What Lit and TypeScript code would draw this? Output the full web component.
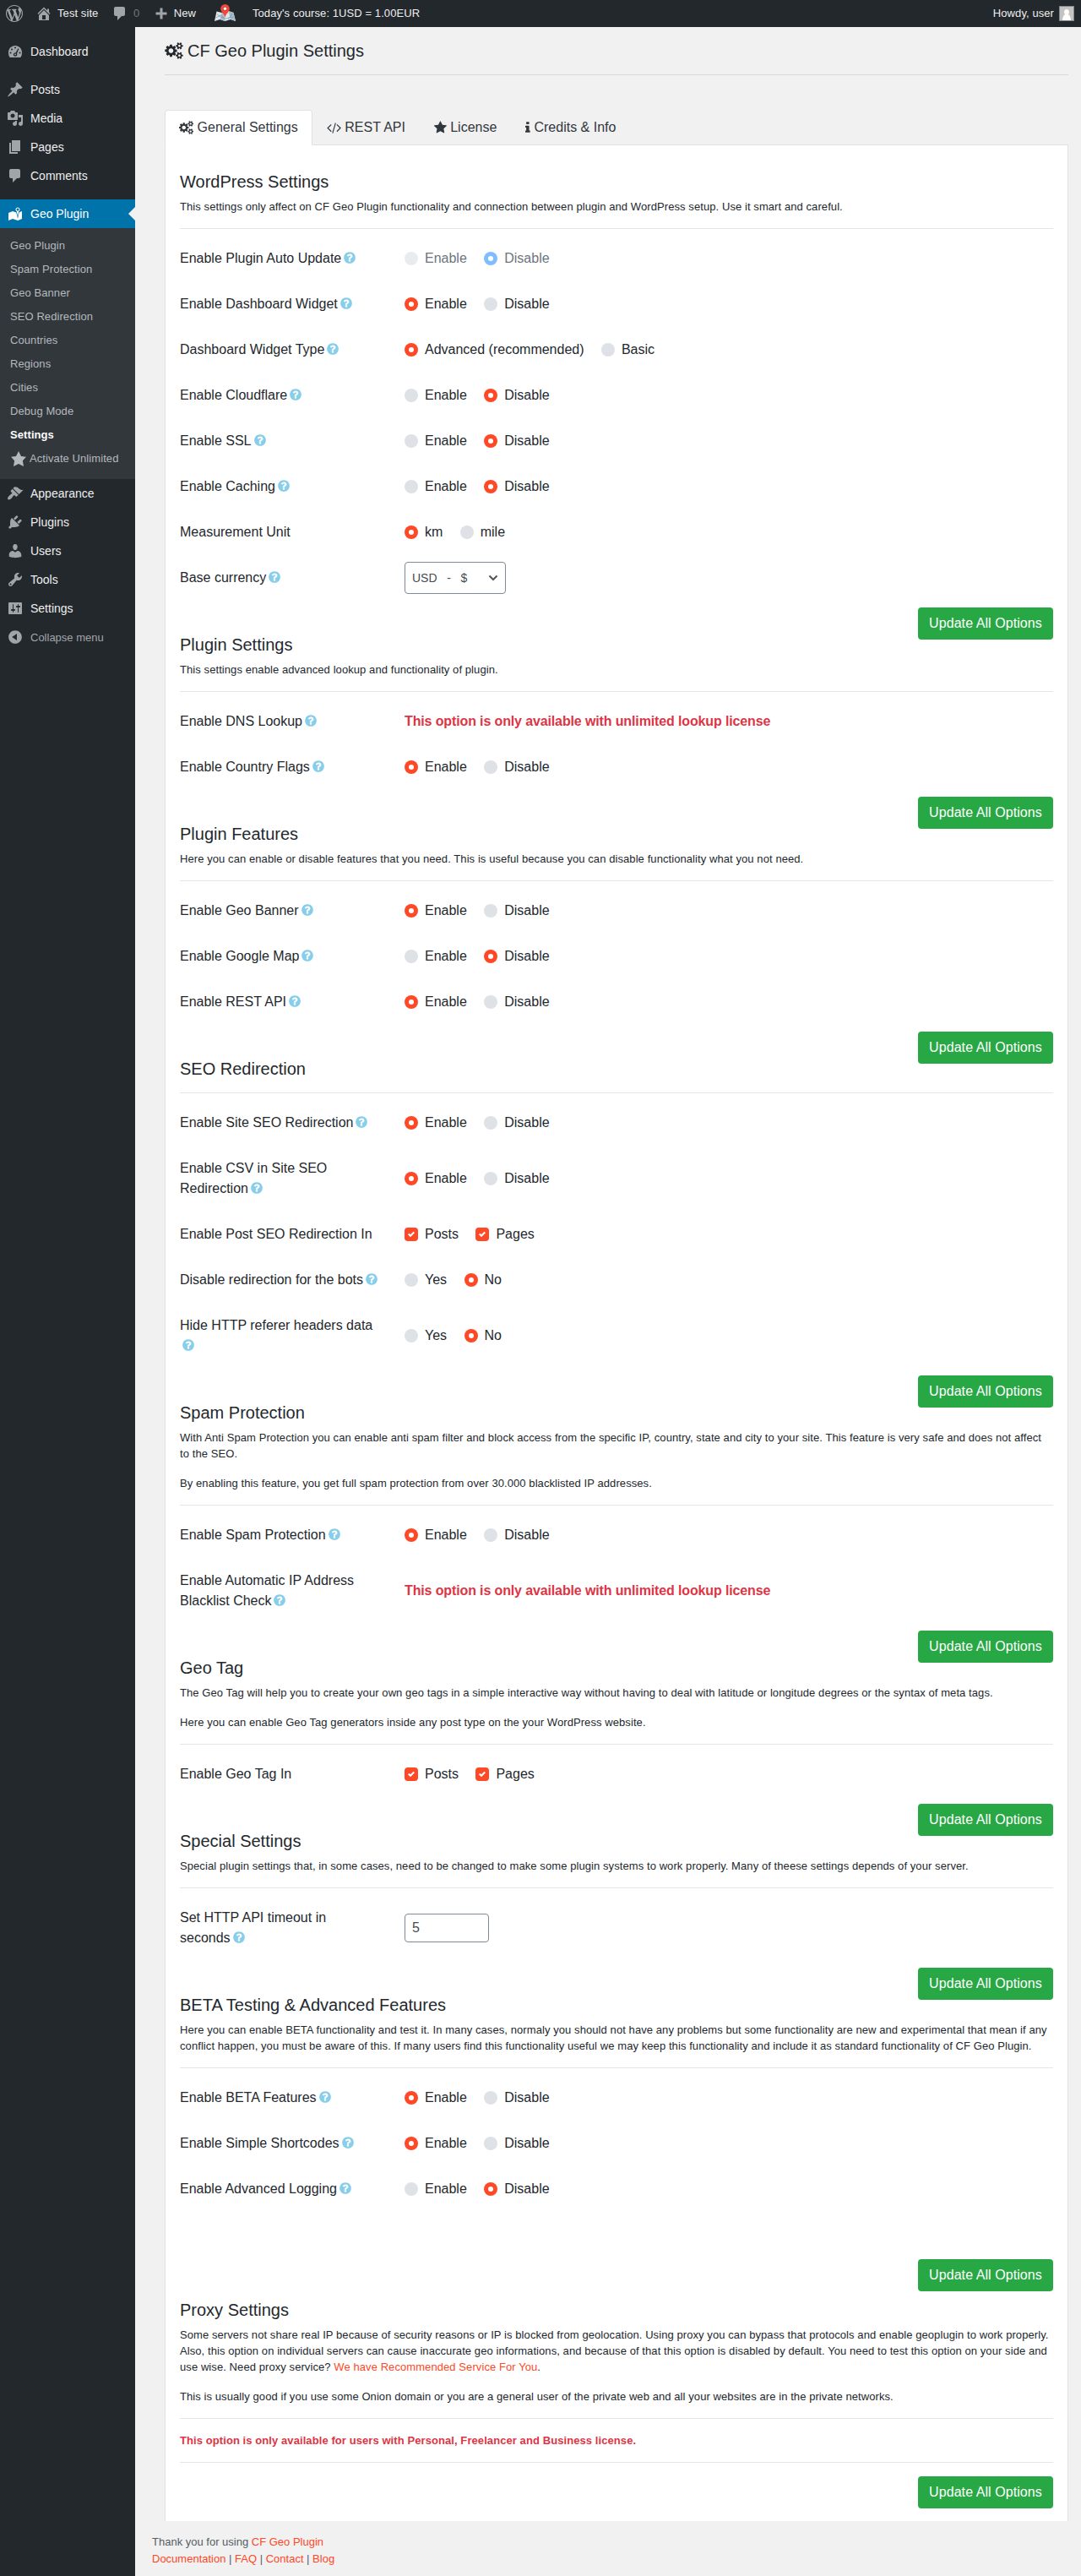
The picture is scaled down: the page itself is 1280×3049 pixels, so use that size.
import { LitElement, html, css, svg, nothing, TemplateResult } from 'lit';
import { customElement, property } from 'lit/decorators.js';
import { classMap } from 'lit/directives/class-map.js';

type Choice = { label: string; on?: boolean };

type Field = {
  label: string;
  help?: boolean;
  disabled?: boolean;
  radios?: Choice[];
  checks?: Choice[];
  notice?: string;
  select?: string;
  input?: string;
};

type Section = {
  title: string;
  text?: (string | TemplateResult)[];
  fields?: Field[];
  warning?: string;
  spacer?: boolean;
};

// name: [viewBox, path]
const ICONS: Record<string, [string, string]> = {
  wordpress: ['0 0 20 20', 'M20 10c0-5.51-4.49-10-10-10C4.48 0 0 4.49 0 10c0 5.52 4.48 10 10 10 5.51 0 10-4.48 10-10zM7.78 15.37L4.37 6.22c.55-.02 1.17-.08 1.17-.08.5-.06.44-1.13-.06-1.11 0 0-1.45.11-2.37.11-.18 0-.37 0-.58-.01C4.12 2.69 6.87 1.11 10 1.11c2.33 0 4.45.87 6.05 2.34-.68-.11-1.65.39-1.65 1.58 0 .74.45 1.36.9 2.1.35.61.55 1.36.55 2.46 0 1.49-1.4 5-1.4 5l-3.03-8.37c.54-.02.82-.17.82-.17.5-.05.44-1.25-.06-1.22 0 0-1.44.12-2.38.12-.87 0-2.33-.12-2.33-.12-.5-.03-.56 1.2-.06 1.22l.92.08 1.26 3.41zM17.41 10c.24-.64.74-1.87.43-4.25.7 1.29 1.05 2.71 1.05 4.25 0 3.29-1.73 6.24-4.4 7.78.97-2.59 1.94-5.2 2.92-7.78zM6.1 18.09C3.12 16.65 1.11 13.53 1.11 10c0-1.3.23-2.48.72-3.59C3.25 10.3 4.67 14.2 6.1 18.09zm4.03-6.63l2.58 6.98c-.86.29-1.76.45-2.71.45-.79 0-1.57-.11-2.29-.33.81-2.38 1.62-4.74 2.42-7.1z'],
  home: ['0 0 20 20', 'M16 8.5l1.53 1.53-1.06 1.06L10 4.6l-6.47 6.49-1.06-1.06L10 2.5l4 4v-2h2v4zm-6-2.46l6 5.99V18H4v-5.97zM12 17v-5H8v5h4z'],
  comments: ['0 0 20 20', 'M5 2h9c1.1 0 2 .9 2 2v7c0 1.1-.9 2-2 2h-2l-5 5v-5H5c-1.1 0-2-.9-2-2V4c0-1.1.9-2 2-2z'],
  plus: ['0 0 20 20', 'M16.500 8.500v3h-5v5h-3v-5h-5v-3h5v-5h3v5z'],
  dashboard: ['0 0 20 20', 'M3.76 17h12.48c1.34-1.63 1.76-3.7 1.76-5.96 0-4.42-3.58-8.04-8-8.04s-8 3.62-8 8.04c0 2.27.42 4.33 1.76 5.96zM9 5.500a1 1 0 1 0 2 0 1 1 0 1 0-2 0zM5 7.500a1 1 0 1 0 2 0 1 1 0 1 0-2 0zM3.500 11.500a1 1 0 1 0 2 0 1 1 0 1 0-2 0zM14.500 11.500a1 1 0 1 0 2 0 1 1 0 1 0-2 0zM13.500 6.300l.9.700-2.300 4.900c.4 1.200.2 2.700-.6 3.400-.9.800-2.300.700-3.100-.2-.8-1-.7-2.400.3-3.100.5-.5 1.200-.6 1.800-.5zM9.200 13.500a.9.9 0 1 0 1.800 0 .9.9 0 1 0-1.800 0z'],
  posts: ['0 0 20 20', 'M10.44 3.02l1.82-1.82 6.36 6.35-1.83 1.82c-1.05-.68-2.48-.57-3.41.36l-.75.75c-.92.93-1.04 2.35-.35 3.41l-1.83 1.82-2.41-2.41-2.8 2.79c-.42.42-3.38 2.71-3.8 2.29s1.86-3.39 2.28-3.81l2.79-2.79L4.1 9.36l1.83-1.82c1.05.69 2.48.57 3.4-.36l.75-.75c.93-.92 1.05-2.35.36-3.41z'],
  media: ['0 0 20 20', 'M13 11V4c0-.55-.45-1-1-1h-1.67L9 1H5L3.67 3H2c-.55 0-1 .45-1 1v7c0 .55.45 1 1 1h10c.55 0 1-.45 1-1zM7 4.5c1.38 0 2.5 1.12 2.5 2.5S8.38 9.5 7 9.5 4.5 8.38 4.5 7 5.62 4.5 7 4.5zM14 6h5v10.5c0 1.38-1.12 2.5-2.5 2.5S14 17.88 14 16.5s1.12-2.5 2.5-2.5c.17 0 .34.02.5.05V9h-3V6zm-4 8.05V13h2v3.5c0 1.38-1.12 2.5-2.5 2.5S7 17.88 7 16.5 8.12 14 9.5 14c.17 0 .34.02.5.05z'],
  pages: ['0 0 20 20', 'M6 15V2h10v13H6zm-1 1h8v2H3V5h2v11z'],
  geo: ['0 0 20 20', 'M13 13.14l1.17-5.94c.79-.43 1.33-1.25 1.33-2.2 0-1.38-1.12-2.5-2.5-2.5S10.5 3.62 10.5 5c0 .95.54 1.77 1.33 2.2zm0-9.64c.83 0 1.5.67 1.5 1.5s-.67 1.5-1.5 1.5-1.5-.67-1.5-1.5.67-1.5 1.5-1.5zm1.72 4.8L18 6.97v9L13.12 18 7 15.97l-5 2v-9l5-2 4.27 1.41 1.73 7.3z'],
  starFilled: ['0 0 20 20', 'M10 1l3 6 6 .75-4.12 4.62L16 19l-6-3-6 3 1.13-6.63L1 7.75 7 7z'],
  appearance: ['0 0 20 20', 'M14.48 11.06L7.41 3.99l1.5-1.5c.5-.56 2.3-.47 3.51.32 1.21.8 1.43 1.28 2.91 2.1 1.18.64 2.45 1.26 4.45.85zm-.71.71L6.7 4.7 4.93 6.47c-.39.39-.39 1.02 0 1.41l1.06 1.06c.39.39.39 1.03 0 1.42-.6.6-1.43 1.11-2.21 1.69-.35.26-.7.53-1.01.84C1.43 14.23.4 16.08 1.4 17.07c.99 1 2.84-.03 4.18-1.36.31-.31.58-.66.85-1.02.57-.78 1.08-1.61 1.69-2.21.39-.39 1.02-.39 1.41 0l1.06 1.06c.39.39 1.02.39 1.41 0z'],
  plugins: ['0 0 20 20', 'M13.11 4.36L9.87 7.6 8 5.73l3.24-3.24c.35-.34 1.05-.2 1.56.32.52.51.66 1.21.31 1.55zm-8 1.77l.91-1.12 9.01 9.01-1.19.84c-.71.71-2.63 1.16-3.82 1.16H6.14L4.9 17.26c-.59.59-1.54.59-2.12 0-.59-.58-.59-1.53 0-2.12l1.24-1.24v-3.88c0-1.13.4-3.19 1.09-3.89zm7.26 3.97l3.24-3.24c.34-.35 1.04-.21 1.55.31.52.51.66 1.21.31 1.55l-3.24 3.25z'],
  users: ['0 0 20 20', 'M10 9.25c-2.27 0-2.73-3.44-2.73-3.44C7 4.02 7.82 2 9.97 2c2.16 0 2.98 2.02 2.71 3.81 0 0-.41 3.44-2.68 3.44zm0 2.57L12.72 10c2.39 0 4.52 2.33 4.52 4.53v2.49s-3.65 1.13-7.24 1.13c-3.65 0-7.24-1.13-7.24-1.13v-2.49c0-2.25 1.94-4.48 4.47-4.48z'],
  tools: ['0 0 20 20', 'M16.68 9.77c-1.34 1.34-3.3 1.67-4.95.99l-5.41 6.52c-.99.99-2.59.99-3.58 0s-.99-2.59 0-3.57l6.52-5.42c-.68-1.65-.35-3.61.99-4.95 1.28-1.28 3.12-1.62 4.72-1.06l-2.89 2.89 2.82 2.82 2.86-2.87c.53 1.58.18 3.39-1.08 4.65zM3.81 16.21c.4.39 1.04.39 1.43 0 .4-.4.4-1.04 0-1.43-.39-.4-1.03-.4-1.43 0-.39.39-.39 1.03 0 1.43z'],
  settings: ['0 0 20 20', 'M18 16V4c0-.55-.45-1-1-1H3c-.55 0-1 .45-1 1v12c0 .55.45 1 1 1h14c.55 0 1-.45 1-1zM8 11h1c.55 0 1 .45 1 1s-.45 1-1 1H8v1.5c0 .28-.22.5-.5.5s-.5-.22-.5-.5V13H6c-.55 0-1-.45-1-1s.45-1 1-1h1V5.5c0-.28.22-.5.5-.5s.5.22.5.5V11zm5-2h-1c-.55 0-1-.45-1-1s.45-1 1-1h1V5.5c0-.28.22-.5.5-.5s.5.22.5.5V7h1c.55 0 1 .45 1 1s-.45 1-1 1h-1v5.5c0 .28-.22.5-.5.5s-.5-.22-.5-.5V9z'],
  collapse: ['0 0 20 20', 'M10 2.16c4.33 0 7.84 3.51 7.84 7.84s-3.51 7.84-7.84 7.84S2.16 14.33 2.16 10 5.67 2.16 10 2.16zm2 11.72V6.12L6.18 9.97z'],
  cogs: ['0 0 1920 1792', 'M896 896q0-106-75-181t-181-75-181 75-75 181 75 181 181 75 181-75 75-181zm768 512q0-52-38-90t-90-38-90 38-38 90q0 53 37.5 90.5t90.5 37.5 90.5-37.5 37.5-90.5zm0-1024q0-52-38-90t-90-38-90 38-38 90q0 53 37.5 90.5t90.5 37.5 90.5-37.5 37.5-90.5zm-384 421v185q0 10-7 19.5t-16 10.5l-155 24q-11 35-32 76 34 48 90 115 7 11 7 20 0 12-7 19-23 30-82.5 89.5t-78.5 59.5q-11 0-21-7l-115-90q-37 19-77 31-11 108-23 155-7 24-30 24h-186q-11 0-20-7.5t-10-17.5l-23-153q-34-10-75-31l-118 89q-7 7-20 7-11 0-21-8-144-133-144-160 0-9 7-19 10-14 41-53t47-61q-23-44-35-82l-152-24q-10-1-17-9.5t-7-19.5v-185q0-10 7-19.5t16-10.5l155-24q11-35 32-76-34-48-90-115-7-11-7-20 0-12 7-20 22-30 82-89t79-59q11 0 21 7l115 90q34-18 77-32 11-108 23-154 7-24 30-24h186q11 0 20 7.5t10 17.5l23 153q34 10 75 31l118-89q8-7 20-7 11 0 21 8 144 133 144 160 0 8-7 19-12 16-42 54t-45 60q23 48 34 82l152 23q10 2 17 10.5t7 19.5zm640 533v140q0 16-149 31-12 27-30 52 51 113 51 138 0 4-4 7-122 71-124 71-8 0-46-47t-52-68q-20 2-30 2t-30-2q-14 21-52 68t-46 47q-2 0-124-71-4-3-4-7 0-25 51-138-18-25-30-52-149-15-149-31v-140q0-16 149-31 13-29 30-52-51-113-51-138 0-4 4-7 4-2 35-20t59-34 30-16q8 0 46 46.5t52 67.5q20-2 30-2t30 2q51-71 92-112l6-2q4 0 124 70 4 3 4 7 0 25-51 138 17 23 30 52 149 15 149 31zm0-1024v140q0 16-149 31-12 27-30 52 51 113 51 138 0 4-4 7-122 71-124 71-8 0-46-47t-52-68q-20 2-30 2t-30-2q-14 21-52 68t-46 47q-2 0-124-71-4-3-4-7 0-25 51-138-18-25-30-52-149-15-149-31v-140q0-16 149-31 13-29 30-52-51-113-51-138 0-4 4-7 4-2 35-20t59-34 30-16q8 0 46 46.5t52 67.5q20-2 30-2t30 2q51-71 92-112l6-2q4 0 124 70 4 3 4 7 0 25-51 138 17 23 30 52 149 15 149 31z'],
  code: ['64 0 1920 1792', 'M681 1399l-50 50q-10 10-23 10t-23-10l-466-466q-10-10-10-23t10-23l466-466q10-10 23-10t23 10l50 50q10 10 10 23t-10 23l-393 393 393 393q10 10 10 23t-10 23zm591-1067l-373 1291q-4 13-15.5 19.5t-23.5 2.5l-62-17q-13-4-19.5-15.5t-2.5-24.5l373-1291q4-13 15.5-19.5t23.5-2.5l62 17q13 4 19.5 15.5t2.5 24.5zm657 651l-466 466q-10 10-23 10t-23-10l-50-50q-10-10-10-23t10-23l393-393-393-393q-10-10-10-23t10-23l50-50q10-10 23-10t23 10l466 466q10 10 10 23t-10 23z'],
  star: ['64 0 1664 1792', 'M1728 647q0 22-26 48l-363 354 86 500q1 7 1 20 0 21-10.5 35.5t-30.5 14.5q-19 0-40-12l-449-236-449 236q-22 12-40 12-21 0-31.5-14.5t-10.5-35.5q0-6 2-20l86-500-364-354q-25-27-25-48 0-37 56-46l502-73 225-455q19-41 49-41t49 41l225 455 502 73q56 9 56 46z'],
  info: ['576 0 640 1792', 'M1216 1344v128q0 26-19 45t-45 19h-512q-26 0-45-19t-19-45v-128q0-26 19-45t45-19h64v-384h-64q-26 0-45-19t-19-45v-128q0-26 19-45t45-19h384q26 0 45 19t19 45v576h64q26 0 45 19t19 45zm-128-1152v192q0 26-19 45t-45 19h-256q-26 0-45-19t-19-45v-192q0-26 19-45t45-19h256q26 0 45 19t19 45z'],
  question: ['128 0 1536 1792', 'M1024 1376v-192q0-14-9-23t-23-9h-192q-14 0-23 9t-9 23v192q0 14 9 23t23 9h192q14 0 23-9t9-23zm256-672q0-88-55.5-163t-138.5-116-170-41q-243 0-371 213-15 24 8 42l132 100q7 6 19 6 16 0 25-12 53-68 86-92 34-24 86-24 48 0 85.5 26t37.5 59q0 38-20 61t-68 45q-63 28-115.5 86.5t-52.5 125.5v36q0 14 9 23t23 9h192q14 0 23-9t9-23q0-19 21.5-49.5t54.5-49.5q32-18 49-28.5t46-35 44.5-48 28-60.5 12.5-81zm384 192q0 209-103 385.5t-279.5 279.5-385.5 103-385.5-103-279.5-279.5-103-385.5 103-385.5 279.5-279.5 385.5-103 385.5 103 279.5 279.5 103 385.5z'],
};

const icon = (name: string, cls = 'icon') => {
  const [box, path] = ICONS[name];
  return html`<svg class=${cls} viewBox=${box} fill="currentColor">${svg`<path fill-rule="evenodd" d=${path}></path>`}</svg>`;
};

const toggle = (on: string, ...labels: string[]): Choice[] =>
  labels.map(label => ({ label, on: label === on }));
const enable = (on = true) => toggle(on ? 'Enable' : 'Disable', 'Enable', 'Disable');
const postTypes: Choice[] = [{ label: 'Posts', on: true }, { label: 'Pages', on: true }];
const unlimitedOnly = 'This option is only available with unlimited lookup license';

const SECTIONS: Section[] = [
  {
    title: 'WordPress Settings',
    text: ['This settings only affect on CF Geo Plugin functionality and connection between plugin and WordPress setup. Use it smart and careful.'],
    fields: [
      { label: 'Enable Plugin Auto Update', help: true, disabled: true, radios: enable(false) },
      { label: 'Enable Dashboard Widget', help: true, radios: enable() },
      { label: 'Dashboard Widget Type', help: true, radios: toggle('Advanced (recommended)', 'Advanced (recommended)', 'Basic') },
      { label: 'Enable Cloudflare', help: true, radios: enable(false) },
      { label: 'Enable SSL', help: true, radios: enable(false) },
      { label: 'Enable Caching', help: true, radios: enable(false) },
      { label: 'Measurement Unit', radios: toggle('km', 'km', 'mile') },
      { label: 'Base currency', help: true, select: 'USD\u00a0\u00a0\u00a0-\u00a0\u00a0\u00a0$' },
    ],
  },
  {
    title: 'Plugin Settings',
    text: ['This settings enable advanced lookup and functionality of plugin.'],
    fields: [
      { label: 'Enable DNS Lookup', help: true, notice: unlimitedOnly },
      { label: 'Enable Country Flags', help: true, radios: enable() },
    ],
  },
  {
    title: 'Plugin Features',
    text: ['Here you can enable or disable features that you need. This is useful because you can disable functionality what you not need.'],
    fields: [
      { label: 'Enable Geo Banner', help: true, radios: enable() },
      { label: 'Enable Google Map', help: true, radios: enable(false) },
      { label: 'Enable REST API', help: true, radios: enable() },
    ],
  },
  {
    title: 'SEO Redirection',
    fields: [
      { label: 'Enable Site SEO Redirection', help: true, radios: enable() },
      { label: 'Enable CSV in Site SEO Redirection', help: true, radios: enable() },
      { label: 'Enable Post SEO Redirection In', checks: postTypes },
      { label: 'Disable redirection for the bots', help: true, radios: toggle('No', 'Yes', 'No') },
      { label: 'Hide HTTP referer headers data', help: true, radios: toggle('No', 'Yes', 'No') },
    ],
  },
  {
    title: 'Spam Protection',
    text: [
      'With Anti Spam Protection you can enable anti spam filter and block access from the specific IP, country, state and city to your site. This feature is very safe and does not affect to the SEO.',
      'By enabling this feature, you get full spam protection from over 30.000 blacklisted IP addresses.',
    ],
    fields: [
      { label: 'Enable Spam Protection', help: true, radios: enable() },
      { label: 'Enable Automatic IP Address Blacklist Check', help: true, notice: unlimitedOnly },
    ],
  },
  {
    title: 'Geo Tag',
    text: [
      'The Geo Tag will help you to create your own geo tags in a simple interactive way without having to deal with latitude or longitude degrees or the syntax of meta tags.',
      'Here you can enable Geo Tag generators inside any post type on the your WordPress website.',
    ],
    fields: [{ label: 'Enable Geo Tag In', checks: postTypes }],
  },
  {
    title: 'Special Settings',
    text: ['Special plugin settings that, in some cases, need to be changed to make some plugin systems to work properly. Many of theese settings depends of your server.'],
    fields: [{ label: 'Set HTTP API timeout in seconds', help: true, input: '5' }],
  },
  {
    title: 'BETA Testing & Advanced Features',
    text: ['Here you can enable BETA functionality and test it. In many cases, normaly you should not have any problems but some functionality are new and experimental that mean if any conflict happen, you must be aware of this. If many users find this functionality useful we may keep this functionality and include it as standard functionality of CF Geo Plugin.'],
    fields: [
      { label: 'Enable BETA Features', help: true, radios: enable() },
      { label: 'Enable Simple Shortcodes', help: true, radios: enable() },
      { label: 'Enable Advanced Logging', help: true, radios: enable(false) },
    ],
    spacer: true,
  },
  {
    title: 'Proxy Settings',
    text: [
      html`Some servers not share real IP because of security reasons or IP is blocked from geolocation. Using proxy you can bypass that protocols and enable geoplugin to work properly. Also, this option on individual servers can cause inaccurate geo informations, and because of that this option is disabled by default. You need to test this option on your side and use wise. Need proxy service? <a class="link">We have Recommended Service For You</a>.`,
      'This is usually good if you use some Onion domain or you are a general user of the private web and all your websites are in the private networks.',
    ],
    warning: 'This option is only available for users with Personal, Freelancer and Business license.',
  },
];

@customElement('admin-bar')
export class AdminBar extends LitElement {
  static styles = css`
    :host {
      display: flex;
      align-items: center;
      height: 32px;
      box-sizing: border-box;
      padding: 0 8px 0 7px;
      background: #23282d;
      color: #eee;
      font-size: 13px;
      letter-spacing: 0.08px;
    }
    .icon {
      width: 20px;
      height: 20px;
      color: #a0a5aa;
    }
    .item {
      display: flex;
      align-items: center;
      gap: 6px;
      margin-right: 15px;
      height: 32px;
    }
    .home {
      margin-right: 15.5px;
    }
    .count {
      color: #72777c;
    }
    .comments {
      margin-right: 15.5px;
    }
    .new {
      gap: 5px;
      margin-right: 22px;
    }
    .map {
      width: 25px;
      height: 21px;
      margin: 0 20px 2px 0;
    }
    .text {
      line-height: 32px;
      padding-bottom: 1px;
    }
    .user {
      margin-left: auto;
    }
    .avatar {
      width: 16px;
      height: 16px;
      margin-left: 6px;
      border: 1px solid #82878c;
      background: #c3c3c3;
    }
  `;

  render() {
    return html`
      <span class="item">${icon('wordpress')}</span>
      <span class="item home">${icon('home')}<span class="text">Test site</span></span>
      <span class="item comments">${icon('comments')}<span class="text count">0</span></span>
      <span class="item new">${icon('plus')}<span class="text">New</span></span>
      <svg class="map" viewBox="0 0 25 21">
        <path fill="#dfe6ea" d="M2.500 8.500l6 1.500 8-2 6 2 2.500 10-6-2-6.500 2-6-2L0 20z"></path>
        <path fill="#a9bccb" d="M8.500 10l-2 8 6 2V9zM16.500 8l2.500 10 6 2-2.500-10z"></path>
        <path stroke="#6d8ba6" stroke-width=".6" fill="none" d="M1.500 16l6-3 5 4 10-2M3 12l8 5M21 11l-5 7"></path>
        <path fill="#f4463b" d="M12.500 15.500C11.500 11 7.200 9 7.200 5.200a5.300 5.200 0 0 1 10.600 0c0 3.800-4.300 5.800-5.300 10.300z"></path>
        <circle fill="#a83a33" cx="12.500" cy="5.300" r="2.300"></circle>
        <circle fill="#fff" cx="12.500" cy="5.300" r="1.800"></circle>
      </svg>
      <span class="text">Today's course: 1USD = 1.00EUR</span>
      <span class="text user">Howdy, user</span>
      <svg class="avatar" viewBox="0 0 16 16">
        <path fill="#fff" d="M8 3c1.700 0 3 1.300 3 3.200 0 1.200-.5 2.200-1.300 2.800 1.800.8 3.100 3 3.300 7H3c.2-4 1.500-6.200 3.300-7C5.500 8.400 5 7.400 5 6.200 5 4.300 6.300 3 8 3z"></path>
      </svg>
    `;
  }
}

@customElement('admin-menu')
export class AdminMenu extends LitElement {
  static styles = css`
    :host {
      display: block;
      width: 160px;
      flex: none;
      box-sizing: border-box;
      padding-top: 12px;
      background: #23282d;
      color: #eee;
      font-size: 14px;
    }
    .item {
      display: flex;
      align-items: center;
      gap: 8px;
      height: 34px;
      padding-left: 8px;
    }
    .icon {
      width: 20px;
      height: 20px;
      color: #a0a5aa;
    }
    .gap {
      margin-bottom: 11px;
    }
    .current {
      position: relative;
      background: #0073aa;
      color: #fff;
    }
    .current .icon {
      color: #fff;
    }
    .current::after {
      content: '';
      position: absolute;
      right: 0;
      top: 9px;
      border: 8px solid transparent;
      border-left: 0;
      border-right-color: #f1f1f1;
    }
    .submenu {
      padding: 6px 0 11px 12px;
      background: #32373c;
      color: #b4b9be;
      font-size: 13px;
      letter-spacing: 0.08px;
    }
    .sub {
      display: flex;
      align-items: center;
      gap: 3px;
      height: 28px;
    }
    .sub .icon {
      color: inherit;
      margin-top: 2px;
    }
    .active {
      color: #fff;
      font-weight: bold;
    }
    .collapse {
      color: #a0a5aa;
      font-size: 13px;
    }
  `;

  item(glyph: string, label: string, cls = '') {
    return html`<div class="item ${cls}">${icon(glyph)}<span>${label}</span></div>`;
  }

  render() {
    const links = ['Geo Plugin', 'Spam Protection', 'Geo Banner', 'SEO Redirection', 'Countries', 'Regions', 'Cities', 'Debug Mode', 'Settings'];
    return html`
      ${this.item('dashboard', 'Dashboard', 'gap')}
      ${this.item('posts', 'Posts')}
      ${this.item('media', 'Media')}
      ${this.item('pages', 'Pages')}
      ${this.item('comments', 'Comments', 'gap')}
      ${this.item('geo', 'Geo Plugin', 'current')}
      <div class="submenu">
        ${links.map(link => html`<div class=${classMap({ sub: true, active: link === 'Settings' })}>${link}</div>`)}
        <div class="sub">${icon('starFilled')}<span>Activate Unlimited</span></div>
      </div>
      ${this.item('appearance', 'Appearance')}
      ${this.item('plugins', 'Plugins')}
      ${this.item('users', 'Users')}
      ${this.item('tools', 'Tools')}
      ${this.item('settings', 'Settings')}
      ${this.item('collapse', 'Collapse menu', 'collapse')}
    `;
  }
}

@customElement('settings-section')
export class SettingsSection extends LitElement {
  @property({ attribute: false }) section!: Section;

  static styles = css`
    :host {
      display: block;
    }
    .title {
      margin: 0 0 8px;
      font-size: 20px;
      line-height: 24px;
      font-weight: 400;
    }
    .text {
      margin: 0 0 16px;
      font-size: 13px;
      line-height: 19px;
      letter-spacing: 0.08px;
    }
    .link {
      color: #ff4826;
    }
    .rule {
      height: 1px;
      margin: 16px 0;
      border: 0;
      background: #e5e5e5;
    }
    .warning {
      color: #dc3545;
      font-weight: bold;
    }
    .notice {
      letter-spacing: -0.13px;
    }
    .row {
      display: grid;
      grid-template-columns: 236px 1fr;
      column-gap: 30px;
      align-items: center;
      margin-bottom: 16px;
      line-height: 24px;
    }
    .label {
      padding: 7px 0;
    }
    .help {
      width: 14px;
      height: 16px;
      margin-left: 3px;
      vertical-align: -2px;
      color: #87ceeb;
    }
    .choices {
      display: flex;
      gap: 20.4px;
    }
    .choice {
      display: flex;
      align-items: center;
      gap: 8px;
    }
    .mark {
      width: 16px;
      height: 16px;
      border-radius: 50%;
      background: #dee2e6;
    }
    .mark.square {
      border-radius: 4px;
    }
    .mark.on {
      background: #ff4826;
    }
    .disabled {
      color: #6c757d;
    }
    .disabled .mark {
      background: #e9ecef;
    }
    .disabled .mark.on {
      background: #80bdff;
    }
    .select,
    .input {
      display: flex;
      align-items: center;
      justify-content: space-between;
      box-sizing: border-box;
      border: 1px solid #7e8993;
      border-radius: 4px;
      padding: 0 8px;
      color: #444b52;
    }
    .select {
      width: 120px;
      height: 38px;
      font-size: 14px;
    }
    .input {
      width: 100px;
      height: 34px;
    }
    .chevron {
      width: 12px;
      height: 12px;
    }
    .spacer {
      height: 48px;
    }
    /* shorter than the button, so the next title starts beside it */
    .actions {
      display: flex;
      justify-content: flex-end;
      align-items: flex-start;
      height: 32px;
    }
    .spacer + .actions {
      height: 48px;
    }
    .button {
      width: 160px;
      height: 38px;
      padding: 0;
      border: 0;
      border-radius: 4px;
      background: #28a745;
      color: #fff;
      font: inherit;
      letter-spacing: 0.07px;
    }
  `;

  renderChoices(field: Field, list: Choice[], square: boolean) {
    const glyph = square
      ? svg`<path fill="#fff" transform="translate(4 4)" d="M6.564.75l-3.59 3.612-1.538-1.55L0 4.26 2.974 7.25 8 2.193z"></path>`
      : svg`<circle fill="#fff" cx="8" cy="8" r="3"></circle>`;
    return html`
      <div class=${classMap({ choices: true, disabled: !!field.disabled })}>
        ${list.map(c => html`
          <label class="choice">
            <svg class=${classMap({ mark: true, square, on: !!c.on })} viewBox="0 0 16 16">${c.on ? glyph : nothing}</svg>
            <span>${c.label}</span>
          </label>`)}
      </div>
    `;
  }

  renderControl(field: Field) {
    if (field.radios) return this.renderChoices(field, field.radios, false);
    if (field.checks) return this.renderChoices(field, field.checks, true);
    if (field.notice) return html`<div class="warning notice">${field.notice}</div>`;
    if (field.select) {
      return html`
        <div class="select">
          <span>${field.select}</span>
          <svg class="chevron" viewBox="0 0 12 12" fill="none" stroke="#555" stroke-width="2">
            <path d="M1.500 3.500L6 8l4.500-4.500"></path>
          </svg>
        </div>`;
    }
    return html`<div class="input">${field.input}</div>`;
  }

  render() {
    const { title, text = [], fields = [], warning, spacer } = this.section;
    return html`
      <h5 class="title">${title}</h5>
      ${text.map(t => html`<p class="text">${t}</p>`)}
      <hr class="rule">
      ${warning ? html`<p class="text warning">${warning}</p><hr class="rule">` : nothing}
      ${fields.map(field => html`
        <div class="row">
          <div class="label">${field.label}${field.help ? icon('question', 'help') : nothing}</div>
          ${this.renderControl(field)}
        </div>`)}
      ${spacer ? html`<div class="spacer"></div>` : nothing}
      <div class="actions"><button class="button">Update All Options</button></div>
    `;
  }
}

@customElement('app-root')
export class AppRoot extends LitElement {
  static styles = css`
    :host {
      display: block;
      background: #f1f1f1;
      color: #23282d;
      font-family: 'Liberation Sans', Arial, sans-serif;
      font-size: 16px;
    }
    .layout {
      display: flex;
      min-height: 3017px;
    }
    .main {
      flex: 1;
      padding-left: 20px;
    }
    .wrap {
      padding: 16px 15px 0;
    }
    .heading {
      display: flex;
      align-items: center;
      gap: 5px;
      margin: 0 0 16px;
      font-size: 20px;
      line-height: 24px;
      font-weight: 400;
    }
    .cogs {
      width: 22px;
      height: 20px;
    }
    .rule {
      height: 1px;
      margin: 0 0 41px;
      border: 0;
      background: #d9d9d9;
    }
    .tabs {
      display: flex;
      border-bottom: 1px solid #dee2e6;
      color: #32373c;
    }
    .tab {
      display: flex;
      align-items: center;
      gap: 4.4px;
      height: 24px;
      padding: 8px 16px;
      margin-bottom: -1px;
      border: 1px solid transparent;
      border-radius: 4px 4px 0 0;
    }
    .tab.active {
      background: #fff;
      border-color: #dee2e6 #dee2e6 #fff;
    }
    .glyph {
      height: 16px;
    }
    .panel {
      padding: 31px 17px 21px;
      border: 1px solid #dee2e6;
      border-width: 0 1px;
      background: #fff;
    }
    .footer {
      padding-top: 15px;
      color: #555d66;
      font-size: 13px;
      line-height: 20px;
    }
    .link {
      color: #ff4826;
    }
  `;

  render() {
    const tabs = [
      ['cogs', 'General Settings'],
      ['code', 'REST API'],
      ['star', 'License'],
      ['info', 'Credits & Info'],
    ];
    return html`
      <admin-bar></admin-bar>
      <div class="layout">
        <admin-menu></admin-menu>
        <main class="main">
          <div class="wrap">
            <h1 class="heading">${icon('cogs', 'cogs')}<span>CF Geo Plugin Settings</span></h1>
            <hr class="rule">
            <nav class="tabs">
              ${tabs.map(([glyph, label], i) => html`
                <a class=${classMap({ tab: true, active: i === 0 })}>${icon(glyph, 'glyph')}<span>${label}</span></a>`)}
            </nav>
            <div class="panel">
              ${SECTIONS.map(section => html`<settings-section .section=${section}></settings-section>`)}
            </div>
          </div>
          <footer class="footer">
            <div>Thank you for using <a class="link">CF Geo Plugin</a></div>
            <div><a class="link">Documentation</a> | <a class="link">FAQ</a> | <a class="link">Contact</a> | <a class="link">Blog</a></div>
          </footer>
        </main>
      </div>
    `;
  }
}
